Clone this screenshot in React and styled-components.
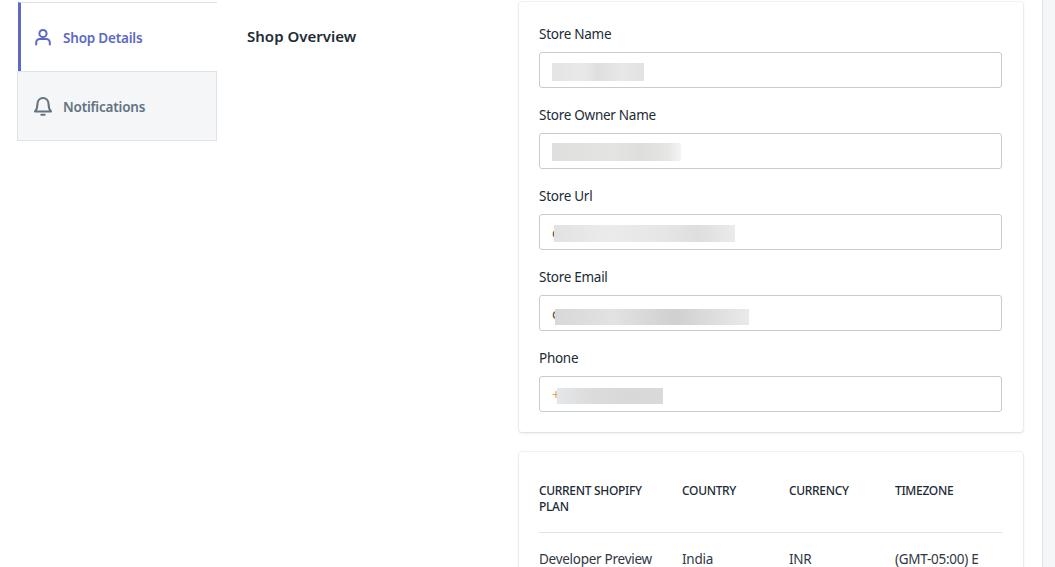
import React from 'react';
import styled, { createGlobalStyle } from 'styled-components';

const Global = createGlobalStyle`
  html, body {
    margin: 0;
    height: 100%;
    overflow: hidden;
    background: #fff;
  }
  body {
    font-family: "Noto Sans", "Open Sans", sans-serif;
    font-size: 14px;
    color: #212b36;
  }
`;

const Page = styled.div`
  display: flex;
  height: 567px;
  overflow: hidden;
`;

const Main = styled.main`
  flex: 1;
  display: flex;
  align-items: flex-start;
  padding: 2px 19px 0 17px;
  min-width: 0;
`;

const Rail = styled.div`
  width: 12px;
  background: #f4f6f8;
  border-left: 1px solid #dfe3e8;
`;

const Tabs = styled.nav`
  width: 200px;
  flex: none;
  display: flex;
  flex-direction: column;
`;

const Tab = styled.a`
  display: flex;
  align-items: center;
  gap: 10px;
  height: ${p => (p.$active ? '69px' : '70px')};
  box-sizing: border-box;
  margin-left: ${p => (p.$active ? '1px' : '0')};
  padding: 2px 0 0 ${p => (p.$active ? '12px' : '15px')};
  font-size: 13.5px;
  font-weight: 600;
  letter-spacing: -0.2px;
  color: ${p => (p.$active ? '#5c6ac4' : '#637381')};
  background: ${p => (p.$active ? '#fff' : '#f4f6f8')};
  border-top: 1px solid #dfe3e8;
  border-left: ${p => (p.$active ? '3px solid #5c6ac4' : '1px solid #dfe3e8')};
  border-right: ${p => (p.$active ? 'none' : '1px solid #dfe3e8')};
  border-bottom: ${p => (p.$active ? 'none' : '1px solid #dfe3e8')};
`;

const TabIcon = styled.svg`
  width: 20px;
  height: 20px;
  flex: none;
  margin-top: -2px;
  fill: none;
  stroke: currentColor;
  stroke-width: 2;
  stroke-linecap: round;
  stroke-linejoin: round;
`;

const Overview = styled.section`
  width: 302px;
  flex: none;
  padding: 24px 0 0 30px;
  box-sizing: border-box;
`;

const Heading = styled.h2`
  margin: 0;
  font-size: 15px;
  line-height: 20px;
  font-weight: 600;
  letter-spacing: 0.02px;
`;

const Column = styled.div`
  flex: 1;
  min-width: 0;
  display: flex;
  flex-direction: column;
  gap: 20px;
`;

const Card = styled.div`
  background: #fff;
  border-radius: 3px;
  box-shadow: 0 0 0 1px rgba(63, 63, 68, 0.05), 0 1px 3px 0 rgba(63, 63, 68, 0.15);
  padding: ${p => p.$pad};
`;

const Field = styled.div`
  margin-bottom: 17px;
  &:last-child {
    margin-bottom: 0;
  }
`;

const Label = styled.label`
  display: block;
  font-size: 13.5px;
  line-height: 20px;
  letter-spacing: -0.27px;
  margin-bottom: 8px;
`;

const InputBox = styled.div`
  height: 36px;
  box-sizing: border-box;
  border: 1px solid #c4cdd5;
  border-radius: 3px;
  display: flex;
  align-items: center;
  padding-left: 12px;
  overflow: hidden;
`;

const Peek = styled.span`
  flex: none;
  width: 7px;
  margin-right: ${p => p.$w - 7}px;
  font-size: 14px;
  color: ${p => p.$color};
`;

const Redacted = styled.div`
  height: ${p => p.$h}px;
  width: ${p => p.$w}px;
  margin-top: ${p => p.$y}px;
  background: ${p => p.$bg};
`;

const PlanTable = styled.table`
  width: 463px;
  table-layout: fixed;
  border-collapse: collapse;
`;

const Th = styled.th`
  width: ${p => p.$w}px;
  box-sizing: border-box;
  padding: 0 20px 17px 0;
  font-size: 12px;
  line-height: 16px;
  font-weight: 500;
  letter-spacing: -0.32px;
  text-align: left;
  vertical-align: top;
  border-bottom: 1px solid #dfe3e8;
`;

const Td = styled.td`
  padding: 16px 0 0;
  font-size: 13.5px;
  line-height: 20px;
  letter-spacing: -0.27px;
  white-space: nowrap;
  color: #30373f;
`;

const fields = [
  { label: 'Store Name', w: 92, h: 18, y: 4, bg: 'linear-gradient(90deg,#e4e4e4,#e9e9e9 35%,#dedede 50%,#e8e8e8 75%,#e2e2e2)' },
  { label: 'Store Owner Name', w: 129, h: 18, y: 2, bg: 'linear-gradient(90deg,#dfdfdd,#e4e4e2 45%,#dededc 70%,#e6e6e4 90%,#f4f4f4)' },
  { label: 'Store Url', peek: 'c', color: '#5a5040', pw: 2, w: 181, h: 17, y: 3, bg: 'linear-gradient(90deg,#e2e2e2,#ebebeb 30%,#e6e6e6 60%,#dedede 80%,#ebebeb)' },
  { label: 'Store Email', peek: 'c', color: '#5a5040', pw: 3, w: 194, h: 16, y: 8, bg: 'linear-gradient(90deg,#d8d8d8,#e2e2e2 30%,#d0d0d0 62%,#dcdcdc 80%,#eaeaea)' },
  { label: 'Phone', peek: '+', color: '#e0a050', pw: 5, w: 106, h: 16, y: 4, bg: 'linear-gradient(90deg,#e4e8ea,#dcdcdc 30%,#d8d8d8 70%,#dadada)' },
];

export default function App() {
  return (
    <Page>
      <Global />
      <Main>
        <Tabs>
          <Tab $active>
            <TabIcon viewBox="0 0 20 20">
              <circle cx="10" cy="6.5" r="3.6" />
              <path d="M3.2 17.6v-2.1a3.6 3.6 0 0 1 3.6-3.6h6.4a3.6 3.6 0 0 1 3.6 3.6v2.1" />
            </TabIcon>
            Shop Details
          </Tab>
          <Tab>
            <TabIcon viewBox="0 0 20 20">
              <path d="M4.5 7.5a5.5 5.5 0 0 1 11 0c0 3 .6 6 2.5 8H2c1.9-2 2.5-5 2.5-8z" />
              <path d="M8.3 18.7h3.4" />
            </TabIcon>
            Notifications
          </Tab>
        </Tabs>
        <Overview>
          <Heading>Shop Overview</Heading>
        </Overview>
        <Column>
          <Card $pad="22px 21px 20px 20px">
            {fields.map(f => (
              <Field key={f.label}>
                <Label>{f.label}</Label>
                <InputBox>
                  {f.peek && <Peek $w={f.pw} $color={f.color}>{f.peek}</Peek>}
                  <Redacted $w={f.w} $h={f.h} $y={f.y} $bg={f.bg} />
                </InputBox>
              </Field>
            ))}
          </Card>
          <Card $pad="31px 21px 20px 20px">
            <PlanTable>
              <thead>
                <tr>
                  <Th $w={143}>CURRENT SHOPIFY PLAN</Th>
                  <Th $w={107}>COUNTRY</Th>
                  <Th $w={106}>CURRENCY</Th>
                  <Th $w={107}>TIMEZONE</Th>
                </tr>
              </thead>
              <tbody>
                <tr>
                  <Td>Developer Preview</Td>
                  <Td>India</Td>
                  <Td>INR</Td>
                  <Td>(GMT-05:00) E</Td>
                </tr>
              </tbody>
            </PlanTable>
          </Card>
        </Column>
      </Main>
      <Rail />
    </Page>
  );
}
